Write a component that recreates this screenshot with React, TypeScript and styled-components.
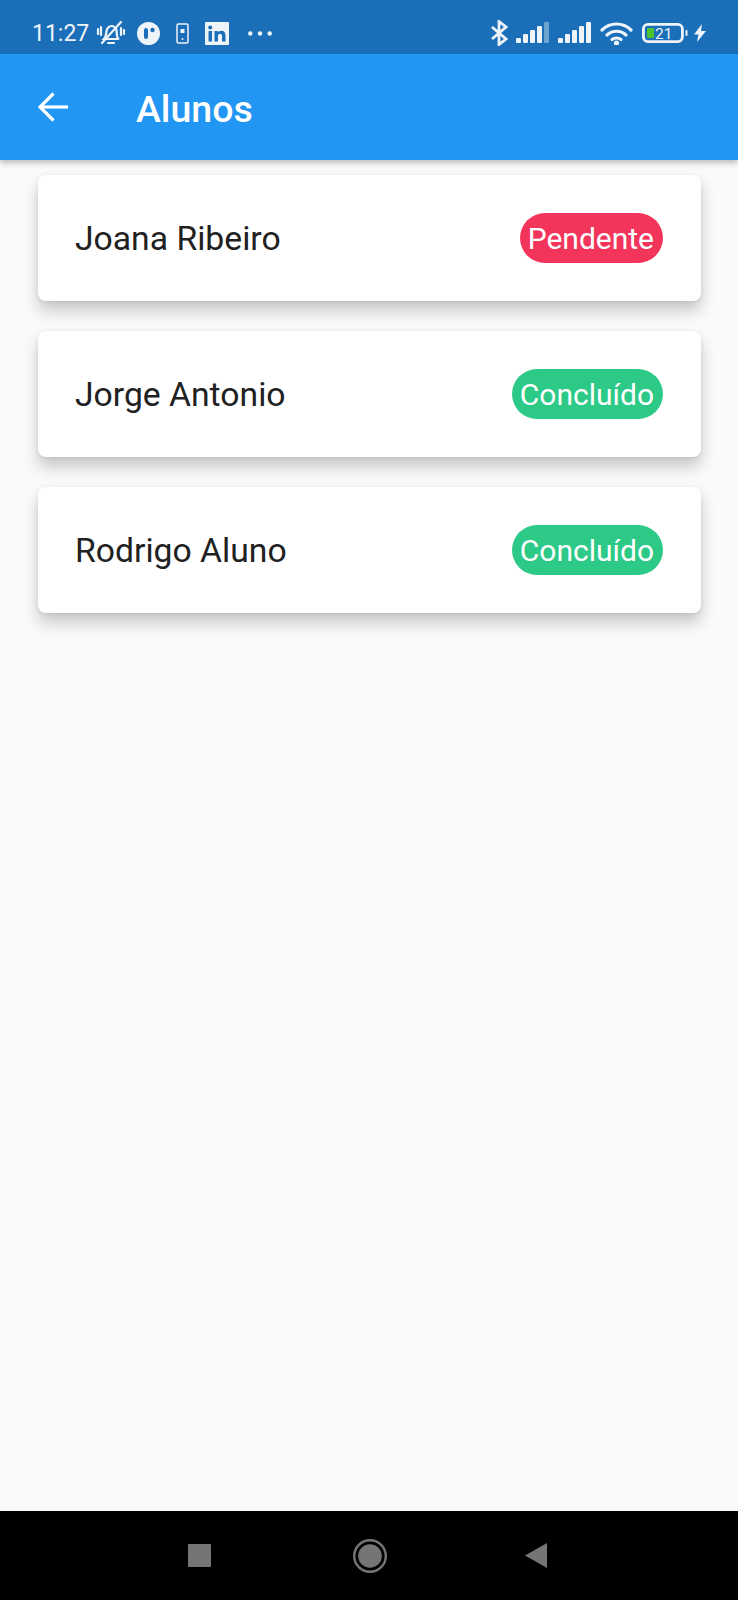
import React from "react";
import styled, { createGlobalStyle } from "styled-components";

interface IStudent {
  name: string;
  status: "Pendente" | "Concluído";
}

interface IBadgeProps {
  $done: boolean;
}

const students: IStudent[] = [
  { name: "Joana Ribeiro", status: "Pendente" },
  { name: "Jorge Antonio", status: "Concluído" },
  { name: "Rodrigo Aluno", status: "Concluído" },
];

const GlobalStyle = createGlobalStyle`
  html, body {
    margin: 0;
    padding: 0;
    background: #fafafa;
    font-family: Roboto, "Liberation Sans", sans-serif;
  }
`;

const Screen = styled.div`
  width: 738px;
  height: 1600px;
  display: flex;
  flex-direction: column;
  background: #fafafa;
  overflow: hidden;
`;

const StatusBar = styled.div`
  height: 54px;
  box-sizing: border-box;
  padding: 12px 32px 0 32px;
  flex-shrink: 0;
  display: flex;
  align-items: center;
  justify-content: space-between;
  background: #1a6fb8;
  color: #eef4fa;
`;

const StatusGroup = styled.div`
  display: flex;
  align-items: center;
`;

const Clock = styled.span`
  font-size: 23px;
  width: 64px;
`;

const StatusIcon = styled.svg<{ $gap?: number }>`
  display: block;
  flex-shrink: 0;
  margin-right: ${({ $gap }) => $gap ?? 0}px;
`;

const AppBar = styled.header`
  height: 106px;
  box-sizing: border-box;
  flex-shrink: 0;
  position: relative;
  z-index: 1;
  display: flex;
  align-items: center;
  gap: 68px;
  padding-left: 38px;
  background: #2196f3;
  box-shadow: 0 3px 6px rgba(0, 0, 0, 0.25);
`;

const Title = styled.h1`
  margin: 3px 0 0;
  color: #fff;
  font-size: 37.5px;
  font-weight: 500;
`;

const List = styled.main`
  flex: 1;
  display: flex;
  flex-direction: column;
  gap: 30px;
  padding: 15px 37px 0 38px;
`;

const Card = styled.article`
  height: 126px;
  box-sizing: border-box;
  padding: 0 38px 0 37px;
  display: flex;
  align-items: center;
  justify-content: space-between;
  background: #fff;
  border-radius: 8px;
  box-shadow: 0 10px 16px rgba(0, 0, 0, 0.2), 0 1px 5px rgba(0, 0, 0, 0.08);
`;

const Name = styled.span`
  color: #212121;
  font-size: 33.7px;
`;

const Badge = styled.span<IBadgeProps>`
  height: 50px;
  box-sizing: border-box;
  padding: 0 9px 0 8px;
  display: flex;
  align-items: center;
  color: #fff;
  font-size: 30px;
  border-radius: 25px;
  background: ${({ $done }) => ($done ? "#2dc986" : "#f3355c")};
`;

const NavBar = styled.nav`
  height: 89px;
  flex-shrink: 0;
  box-sizing: border-box;
  padding-right: 3px;
  display: flex;
  align-items: center;
  justify-content: center;
  gap: 140px;
  background: #000;
`;

const HomeIcon = styled.svg`
  margin: 0 -2px 0 2px;
`;

const SignalBars = ({ faded }: { faded?: boolean }) => (
  <StatusIcon width="33" height="22" viewBox="0 0 33 22" $gap={9} fill="#eef4fa">
    <rect x="0" y="16" width="5" height="5" rx="1" />
    <rect x="7" y="12" width="5" height="9" rx="1" />
    <rect x="14" y="8" width="5" height="13" rx="1" />
    <rect x="21" y="4" width="5" height="17" rx="1" />
    <rect x="28" y="0" width="5" height="21" rx="1" opacity={faded ? 0.4 : 1} />
  </StatusIcon>
);

const App = () => {
  return (
    <Screen>
      <GlobalStyle />
      <StatusBar>
        <StatusGroup>
          <Clock>11:27</Clock>
          {/* muted bell */}
          <StatusIcon width="30" height="26" viewBox="0 0 30 26" $gap={11} fill="none" stroke="#eef4fa" strokeWidth="2.2" strokeLinecap="round">
            <path d="M8 19c2-2 2-4 2.500-8 .5-3 3-5 5-5s4 1.500 5 4l.5 6c.3 1.500 1 2.500 2 3z" />
            <path d="M12 23h6" />
            <path d="M6 23L25 2" />
            <path d="M2 9v5M5 7v8M25 8v7M28 10v4" />
          </StatusIcon>
          <StatusIcon width="23" height="23" viewBox="0 0 23 23" $gap={16}>
            <circle cx="11.500" cy="11.500" r="11.500" fill="#eef4fa" />
            <rect x="7" y="6" width="4" height="11" rx="2" fill="#1a6fb8" />
            <circle cx="15.500" cy="8" r="2.200" fill="#1a6fb8" />
          </StatusIcon>
          <StatusIcon width="13" height="21" viewBox="0 0 13 21" $gap={16} fill="none" stroke="#eef4fa" strokeWidth="1.500">
            <rect x="1" y="1" width="11" height="19" rx="1.500" />
            <rect x="4.500" y="6" width="4" height="4" fill="#eef4fa" stroke="none" />
            <circle cx="6.500" cy="16" r="1" fill="#eef4fa" stroke="none" />
          </StatusIcon>
          <StatusIcon width="24" height="23" viewBox="0 0 24 23" $gap={19}>
            <rect width="24" height="23" rx="1" fill="#eef4fa" />
            <rect x="3.500" y="9" width="3.500" height="10.500" fill="#1a6fb8" />
            <circle cx="5.200" cy="5.500" r="2" fill="#1a6fb8" />
            <path d="M9.500 9h3.300v1.500c.7-1 1.800-1.800 3.500-1.800 3 0 4.200 1.900 4.200 5v5.800H17v-5.200c0-1.500-.5-2.500-1.900-2.500-1.500 0-2.200 1-2.200 2.500v5.200H9.500z" fill="#1a6fb8" />
          </StatusIcon>
          <StatusIcon width="24" height="5" viewBox="0 0 24 5" fill="#eef4fa">
            <circle cx="2.300" cy="2.500" r="2.200" />
            <circle cx="12" cy="2.500" r="2.200" />
            <circle cx="21.700" cy="2.500" r="2.200" />
          </StatusIcon>
        </StatusGroup>
        <StatusGroup>
          <StatusIcon width="18" height="26" viewBox="0 0 18 26" $gap={8} fill="none" stroke="#eef4fa" strokeWidth="2.800" strokeLinejoin="miter">
            <path d="M2 7l14 12-7 5.500V1.500L16 7 2 19" />
          </StatusIcon>
          <SignalBars faded />
          <SignalBars />
          <StatusIcon width="33" height="23" viewBox="0 0 33 23" $gap={9} fill="none" stroke="#eef4fa" strokeWidth="3.200" strokeLinecap="round">
            <path d="M2 8c8-8 21-8 29 0" />
            <path d="M7 13c5.500-5 13.500-5 19 0" />
            <path d="M12 17.500c2.500-2 6.500-2 9 0" />
            <circle cx="16.500" cy="21" r="1" fill="#eef4fa" />
          </StatusIcon>
          <StatusIcon width="46" height="20" viewBox="0 0 46 20" $gap={6}>
            <rect x="1.400" y="1.400" width="39" height="17.200" rx="4.500" fill="none" stroke="#eef4fa" strokeWidth="2.800" />
            <rect x="5" y="5" width="7" height="10" rx="1" fill="#4cc22e" />
            <rect x="43.500" y="7" width="2" height="6" rx="1" fill="#eef4fa" />
            <text x="13" y="15.500" fontFamily="Roboto, sans-serif" fontSize="15.500" fill="#eef4fa">21</text>
          </StatusIcon>
          <StatusIcon width="12" height="18" viewBox="0 0 12 18" fill="#eef4fa">
            <path d="M8 0L0 10.500h4.500L3 18l9-11H7z" />
          </StatusIcon>
        </StatusGroup>
      </StatusBar>

      <AppBar>
        <svg width="30" height="30" viewBox="0 0 30 30" fill="none" stroke="#fff" strokeWidth="3.200">
          <path d="M31 15H2" />
          <path d="M15.500 1.500L2 15l13.500 13.500" />
        </svg>
        <Title>Alunos</Title>
      </AppBar>

      <List>
        {students.map((student) => (
          <Card key={student.name}>
            <Name>{student.name}</Name>
            <Badge $done={student.status === "Concluído"}>{student.status}</Badge>
          </Card>
        ))}
      </List>

      <NavBar>
        <svg width="23" height="23" viewBox="0 0 23 23">
          <rect width="23" height="23" rx="1" fill="#757575" />
        </svg>
        <HomeIcon width="34" height="34" viewBox="0 0 34 34">
          <circle cx="17" cy="17" r="15.800" fill="none" stroke="#757575" strokeWidth="2.400" />
          <circle cx="17" cy="17" r="11.800" fill="#757575" />
        </HomeIcon>
        <svg width="22" height="25" viewBox="0 0 22 25">
          <path d="M22 0v25L0 12.500z" fill="#757575" />
        </svg>
      </NavBar>
    </Screen>
  );
};

export default App;
